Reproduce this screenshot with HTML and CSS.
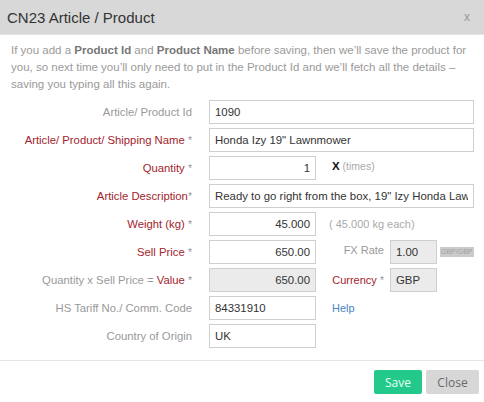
FILE: index.html
```html
<!DOCTYPE html>
<html>
<head>
<meta charset="utf-8">
<link rel="stylesheet" href="styles.css">
</head>
<body>
<div class="modal">
  <div class="modal-header">
    <span class="modal-title">CN23 Article / Product</span>
    <span class="modal-close">x</span>
  </div>
  <p class="intro">If you add a <b>Product Id</b> and <b>Product Name</b> before saving, then we’ll save the product for you, so next time you’ll only need to put in the Product Id and we’ll fetch all the details – saving you typing all this again.</p>
  <div class="form">
    <div class="row">
      <label class="lbl">Article/ Product Id</label>
      <input class="inp" value="1090">
    </div>
    <div class="row">
      <label class="lbl req">Article/ Product/ Shipping Name <span class="ast">*</span></label>
      <input class="inp" value="Honda Izy 19&quot; Lawnmower">
    </div>
    <div class="row">
      <label class="lbl req">Quantity <span class="ast">*</span></label>
      <div class="sub">
        <input class="inp short num" value="1">
        <span class="times"><b>X</b> (times)</span>
      </div>
    </div>
    <div class="row">
      <label class="lbl req">Article Description<span class="ast">*</span></label>
      <input class="inp" value="Ready to go right from the box, 19&quot; Izy Honda Lawnmower">
    </div>
    <div class="row">
      <label class="lbl req">Weight (kg) <span class="ast">*</span></label>
      <div class="sub">
        <input class="inp short num" value="45.000">
        <span class="hint">( 45.000 kg each)</span>
      </div>
    </div>
    <div class="row">
      <label class="lbl req">Sell Price <span class="ast">*</span></label>
      <div class="sub">
        <input class="inp short num" value="650.00">
        <label class="lbl2 fx">FX Rate</label>
        <input class="inp tiny dis" value="1.00">
        <span class="badge">GBP/GBP</span>
      </div>
    </div>
    <div class="row">
      <label class="lbl">Quantity x Sell Price = <span class="redtxt">Value</span> <span class="ast">*</span></label>
      <div class="sub">
        <input class="inp short num dis" value="650.00">
        <label class="lbl2 req">Currency <span class="ast">*</span></label>
        <input class="inp tiny dis" value="GBP">
      </div>
    </div>
    <div class="row">
      <label class="lbl">HS Tariff No./ Comm. Code</label>
      <div class="sub">
        <input class="inp short" value="84331910">
        <a class="help">Help</a>
      </div>
    </div>
    <div class="row">
      <label class="lbl">Country of Origin</label>
      <div class="sub">
        <input class="inp short" value="UK">
      </div>
    </div>
  </div>
  <div class="modal-footer">
    <button class="btn btn-save">Save</button>
    <button class="btn btn-close">Close</button>
  </div>
</div>
</body>
</html>
```

FILE: styles.css
```css
* { box-sizing: border-box; }
html, body { margin: 0; padding: 0; background: #fff; }
body {
  font-family: "Liberation Sans", Arial, sans-serif;
  color: #333;
  width: 484px;
  height: 402px;
  overflow: hidden;
}
.modal { width: 484px; }
.modal-header {
  height: 35px;
  background: #d8d8d8;
  border-bottom: 1px solid #e6e6e6;
  display: flex;
  align-items: center;
  justify-content: space-between;
  padding: 0 14px 0 7px;
}
.modal-title { font-size: 15px; color: #333; }
.modal-close { font-size: 12px; color: #999; }
.intro {
  margin: 0;
  padding: 7px 11px 0 11px;
  font-size: 11.5px;
  line-height: 17px;
  color: #9a9a9a;
}
.intro b { color: #777; }
.form { padding: 7px 10px 0 0; display: flex; flex-direction: column; gap: 4px; }
.row {
  display: grid;
  grid-template-columns: 192px 265px;
  column-gap: 17px;
  height: 24px;
  align-items: center;
}
.lbl { text-align: right; font-size: 11.3px; color: #999; white-space: nowrap; }
.req { color: #a3242d; }
.redtxt { color: #a3242d; }
.ast { color: #999; font-size: 10.5px; }
.inp {
  font: inherit;
  font-size: 11.4px;
  color: #333;
  height: 24px;
  width: 265px;
  border: 1px solid #cfcfcf;
  padding: 0 5px;
  margin: 0;
  background: #fff;
  outline: none;
}
.inp.short { width: 107px; }
.inp.tiny { width: 47px; }
.inp.num { text-align: right; }
.inp.dis { background: #ebebeb; }
.sub { display: flex; align-items: center; height: 24px; }
.times { margin-left: 16px; font-size: 10.5px; color: #aaa; margin-top: -4px; }
.times b { color: #111; font-size: 11.5px; }
.hint { margin-left: 13px; font-size: 11px; color: #aaa; }
.lbl2 { width: 74px; text-align: right; padding-right: 6px; font-size: 11px; white-space: nowrap; }
.fx { color: #999; margin-top: -4px; }
.badge {
  margin-left: 3px;
  font-size: 7px;
  background: #cbcbcb;
  color: #a0a0a0;
  padding: 1px 1px;
  line-height: 8px;
}
.help { margin-left: 16px; font-size: 11px; color: #4b87c2; }
.modal-footer {
  margin-top: 12px;
  border-top: 1px solid #e5e5e5;
  display: flex;
  justify-content: flex-end;
  gap: 4px;
  padding: 9px 5px 8px 0;
}
.btn {
  font-family: "Open Sans", sans-serif;
  font-size: 12px;
  height: 24px;
  border: none;
  border-radius: 2px;
  padding: 0;
  margin: 0;
}
.btn-save { width: 48px; background: #22c98a; color: #e8fff5; }
.btn-close { width: 53px; background: #d7d7d7; color: #6a6a6a; }
```
